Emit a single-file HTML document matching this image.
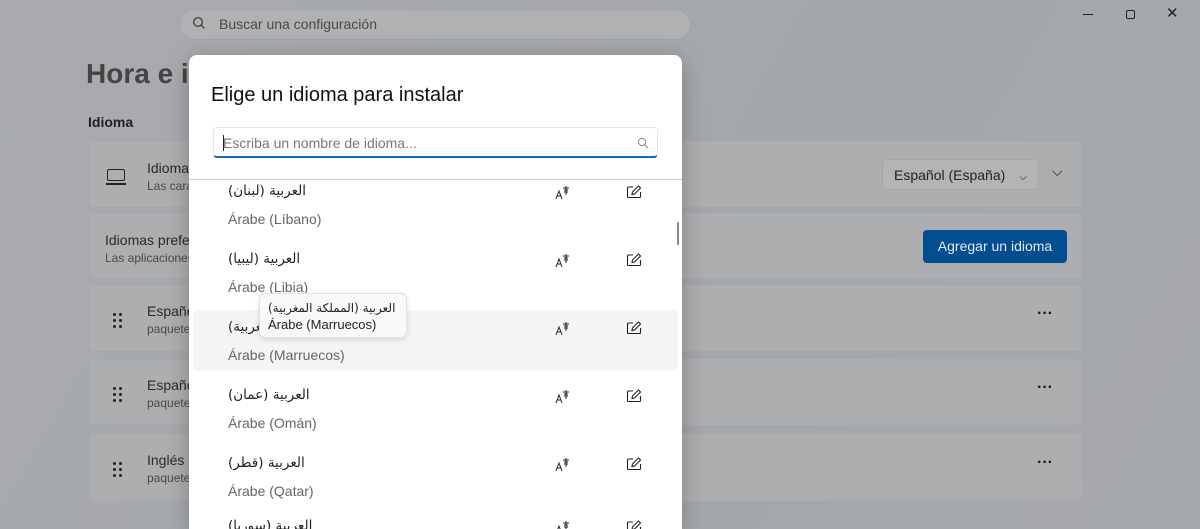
<!DOCTYPE html>
<html style="width:1200px;height:529px;overflow:hidden"><head><meta charset="utf-8"><style>
*{margin:0;padding:0;box-sizing:border-box}
body{width:1200px;height:529px;overflow:hidden;position:relative;background:linear-gradient(120deg,#a9abae,#a4a7ab 60%,#a6a9ad);font-family:"Liberation Sans","DejaVu Sans",sans-serif;color:#1a1a1a}
.a{position:absolute}
.card{position:absolute;left:88px;width:995px;background:#adaeb0;border:1px solid #a6a7a9;border-radius:5px}
.dots{position:absolute;left:24px;top:28px;width:10px;height:16px}
.dots i{position:absolute;width:3px;height:3px;border-radius:50%;background:#222}
.t{font-size:14px;color:#2a2a2a}
.s{font-size:12px;color:#4a4a4a}
.ar{font-family:"DejaVu Sans",sans-serif;font-size:13.5px;color:#222;direction:rtl;unicode-bidi:embed;display:inline-block}
.lat{font-size:14px;color:#666}
</style></head><body>
<div class="a" style="left:179px;top:9px;width:512px;height:31px;border-radius:16px;background:#b0b1b2;border:1px solid #a2a3a5"></div>
<svg class="a" style="left:192px;top:16px" width="14" height="14" viewBox="0 0 14 14"><circle cx="6" cy="6" r="4.3" fill="none" stroke="#333" stroke-width="1.2"/><path d="M9.2 9.2L12.5 12.5" stroke="#333" stroke-width="1.2"/></svg>
<div class="a" style="left:219px;top:16px;font-size:14px;color:#4a4a4a">Buscar una configuración</div>
<div class="a" style="left:1083px;top:14px;width:10px;height:1px;background:#222"></div>
<div class="a" style="left:1126px;top:10px;width:9px;height:9px;border:1px solid #222;border-radius:2px"></div>
<div class="a" style="left:1166px;top:4px;font-size:15px;color:#222">✕</div>
<div class="a" style="left:86px;top:58px;font-size:28px;font-weight:bold;color:#444">Hora e idioma</div>
<div class="a" style="left:88px;top:114px;font-size:14px;font-weight:bold;color:#222">Idioma</div>
<div class="card" style="top:140px;height:68px">
<div class="a" style="left:18px;top:28px;width:18px;height:12px;border:1.5px solid #222;border-radius:2px"></div><div class="a" style="left:17px;top:42px;width:20px;height:1.5px;background:#222"></div>
<div class="a t" style="left:58px;top:19px">Idioma para mostrar de Windows</div>
<div class="a s" style="left:58px;top:38px">Las características como Configuración y el Explorador de archivos aparecerán en este idioma.</div>
<div class="a" style="left:793px;top:18px;width:157px;height:31px;background:#b3b4b5;border:1px solid #a5a6a8;border-radius:4px;font-size:14px;padding:7px 11px;color:#222">Español (España) <span style="font-size:10px;margin-left:10px">⌵</span></div>
<div class="a" style="left:963px;top:22px;font-size:14px;color:#222">⌵</div>
</div>
<div class="card" style="top:212px;height:67px">
<div class="a t" style="left:16px;top:19px">Idiomas preferidos</div>
<div class="a s" style="left:16px;top:38px">Las aplicaciones aparecerán en el primer idioma compatible de esta lista</div>
<div class="a" style="left:834px;top:17px;width:144px;height:33px;background:#024e91;border-radius:4px;color:#e4e8ee;font-size:14px;text-align:center;line-height:32px">Agregar un idioma</div>
</div>
<div class="card" style="top:284px;height:68px"><div class="dots"><i style="left:0;top:0"></i><i style="left:6px;top:0"></i><i style="left:0;top:6px"></i><i style="left:6px;top:6px"></i><i style="left:0;top:12px"></i><i style="left:6px;top:12px"></i></div><div class="a t" style="left:58px;top:18px">Español (España)</div><div class="a s" style="left:58px;top:37px">paquete de idioma</div><div class="a" style="left:948px;top:20px;font-size:16px;font-weight:bold">···</div></div>
<div class="card" style="top:358px;height:68px"><div class="dots"><i style="left:0;top:0"></i><i style="left:6px;top:0"></i><i style="left:0;top:6px"></i><i style="left:6px;top:6px"></i><i style="left:0;top:12px"></i><i style="left:6px;top:12px"></i></div><div class="a t" style="left:58px;top:18px">Español (Estados Unidos)</div><div class="a s" style="left:58px;top:37px">paquete de idioma</div><div class="a" style="left:948px;top:20px;font-size:16px;font-weight:bold">···</div></div>
<div class="card" style="top:433px;height:69px"><div class="dots"><i style="left:0;top:0"></i><i style="left:6px;top:0"></i><i style="left:0;top:6px"></i><i style="left:6px;top:6px"></i><i style="left:0;top:12px"></i><i style="left:6px;top:12px"></i></div><div class="a t" style="left:58px;top:18px">Inglés (Estados Unidos)</div><div class="a s" style="left:58px;top:37px">paquete de idioma</div><div class="a" style="left:948px;top:20px;font-size:16px;font-weight:bold">···</div></div>

<div class="a" style="left:189px;top:55px;width:493px;height:474px;background:#fff;border-radius:8px 8px 0 0;box-shadow:0 4px 24px rgba(0,0,0,.25);overflow:hidden">
<div class="a" style="left:22px;top:29px;font-size:20px;color:#111">Elige un idioma para instalar</div>
<div class="a" style="left:24px;top:72px;width:445px;height:31px;border:1px solid #e6e6e6;border-radius:4px;border-bottom:2px solid #1a68b3"></div>
<div class="a" style="left:34px;top:80px;width:1px;height:16px;background:#222"></div>
<div class="a" style="left:34px;top:80px;font-size:14px;color:#777">Escriba un nombre de idioma...</div>
<svg class="a" style="left:448px;top:82px" width="12" height="12" viewBox="0 0 12 12"><circle cx="5" cy="5" r="3.6" fill="none" stroke="#888"/><path d="M7.6 7.6L11 11" stroke="#888"/></svg>
<div class="a" style="left:0;top:124px;width:493px;height:1px;background:#ccc"></div>
<div class="a" style="left:4px;top:255px;width:485px;height:61px;background:#f5f5f5;border-radius:4px"></div>
<div class="a" style="left:488px;top:167px;width:2px;height:23px;background:#888;border-radius:1px"></div>
<div id="rows" class="a" style="left:-189px;top:-55px;width:1200px;height:529px;overflow:hidden"></div>
</div>
<script>
var d=[["العربية (لبنان)","Árabe (Líbano)",191],["العربية (ليبيا)","Árabe (Libia)",259],["العربية (المملكة المغربية)","Árabe (Marruecos)",327],["العربية (عمان)","Árabe (Omán)",395],["العربية (قطر)","Árabe (Qatar)",463],["العربية (سوريا)","",526]];
var h="";d.forEach(function(r){h+='<div class="a" style="left:228px;top:'+(r[2]-9)+'px"><span class="ar">'+r[0]+'</span></div>'+(r[1]?'<div class="a lat" style="left:228px;top:'+(r[2]+20)+'px">'+r[1]+'</div>':'')+
'<svg class="a" style="left:555px;top:'+(r[2]-6)+'px" width="16" height="16" viewBox="0 0 16 16"><path d="M1 14L4 6L7 14M2.2 11h3.6" fill="none" stroke="#222" stroke-width="1"/><path d="M8 3h6M9 5h4M11 1v9M9 7h4" fill="none" stroke="#222" stroke-width="1"/></svg>'+
'<svg class="a" style="left:626px;top:'+(r[2]-6)+'px" width="16" height="14" viewBox="0 0 16 14"><path d="M7 2H2.5a1 1 0 0 0-1 1v8.5a1 1 0 0 0 1 1h11a1 1 0 0 0 1-1V7" fill="none" stroke="#222" stroke-width="1.1"/><path d="M6 9.5L6.5 7 12.5 1 14.5 3 8.5 9z" fill="none" stroke="#222" stroke-width="1.1"/></svg>';});
document.getElementById("rows").innerHTML=h;
</script>
<div class="a" style="left:259px;top:293px;width:148px;height:45px;background:#f9f9f9;border:1px solid #e2e2e2;border-radius:6px;box-shadow:0 2px 6px rgba(0,0,0,.12)">
<div class="a" style="left:8px;top:5px"><span class="ar" style="font-size:12px">العربية (المملكة المغربية)</span></div>
<div class="a" style="left:8px;top:23px;font-size:13px;color:#222">Árabe (Marruecos)</div>
</div>
</body></html>
